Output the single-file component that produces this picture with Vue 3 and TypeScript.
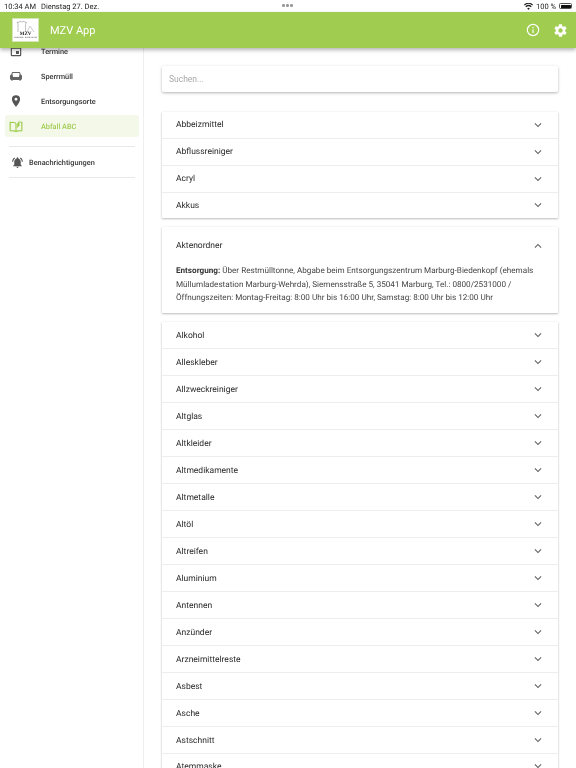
<script setup lang="ts">
const before: string[] = ['Abbeizmittel', 'Abflussreiniger', 'Acryl', 'Akkus']
const after: string[] = ['Alkohol', 'Alleskleber', 'Allzweckreiniger', 'Altglas', 'Altkleider', 'Altmedikamente', 'Altmetalle', 'Altöl', 'Altreifen', 'Aluminium', 'Antennen', 'Anzünder', 'Arzneimittelreste', 'Asbest', 'Asche', 'Astschnitt', 'Atemmaske']
</script>

<template>
  <div class="page">
    <div class="status">
      <span class="time">10:34 AM</span>
      <span class="date">Dienstag 27. Dez.</span>
      <span class="dots"><i></i><i></i><i></i></span>
      <span class="status-right">
        <svg width="9" height="7" viewBox="0 0 24 18"><path fill="#222" d="M12 18l-3.6-4.2a5.5 5.5 0 0 1 7.2 0zM5.8 10.8L3.5 8.2a13 13 0 0 1 17 0l-2.300 2.600a9.500 9.500 0 0 0-12.400 0zM1.900 6L0 3.600a18.500 18.500 0 0 1 24 0L22.100 6a15.500 15.500 0 0 0-20.200 0z"/></svg>
        <span>100 %</span>
        <span class="battery"><b></b></span>
      </span>
    </div>
    <header class="bar">
      <div class="logo">
        <svg width="25" height="22" viewBox="0 0 25 22">
          <path d="M5 13V5l-1-2 2 .5L7 2l2 1 2-1 1 1.500 1.500-.5-1 2.500V13" fill="none" stroke="#a8a8a8" stroke-width=".7"/>
          <path d="M14 13l3-6 2 3 2 3" fill="none" stroke="#b5b5b5" stroke-width=".7"/>
        </svg>
        <span class="logo-t">MZV</span>
        <span class="logo-s">MARBURG-BIEDENKOPF</span>
      </div>
      <span class="title">MZV App</span>
      <div class="actions">
        <svg width="14" height="14" viewBox="0 0 24 24"><circle cx="12" cy="12" r="9.700" fill="none" stroke="#fff" stroke-width="2"/><path d="M11 11h2v6h-2zM11 7h2v2h-2z" fill="#fff"/></svg>
        <svg width="15" height="15" viewBox="0 0 24 24"><path fill="#fff" d="M19.400 13c.04-.33.06-.66.06-1s-.02-.67-.06-1l2.100-1.650a.5.5 0 0 0 .12-.64l-2-3.460a.5.500 0 0 0-.61-.22l-2.490 1a7.300 7.300 0 0 0-1.690-.98l-.38-2.650A.49.49 0 0 0 14 2h-4a.49.49 0 0 0-.49.420l-.38 2.650c-.61.25-1.170.59-1.690.98l-2.490-1a.5.500 0 0 0-.61.220l-2 3.460a.49.49 0 0 0 .12.640L4.570 11c-.04.33-.07.67-.07 1s.03.67.07 1l-2.110 1.650a.5.500 0 0 0-.12.640l2 3.460c.12.22.39.3.61.22l2.490-1c.52.4 1.080.73 1.690.98l.38 2.650c.03.24.24.42.49.42h4c.25 0 .46-.18.49-.42l.38-2.650c.61-.25 1.170-.59 1.690-.98l2.490 1c.23.08.49 0 .61-.22l2-3.460a.5.500 0 0 0-.12-.64zM12 15.500a3.500 3.500 0 1 1 0-7 3.500 3.500 0 0 1 0 7z"/></svg>
      </div>
    </header>
    <div class="body">
      <aside class="side">
        <nav class="nav">
          <div class="item">
            <svg viewBox="0 0 24 24"><path fill="#555" d="M17 12h-5v5h5zM19 3h-1V1h-2v2H8V1H6v2H5a2 2 0 0 0-2 2v14a2 2 0 0 0 2 2h14a2 2 0 0 0 2-2V5a2 2 0 0 0-2-2zm0 16H5V8h14z"/></svg>
            <span>Termine</span>
          </div>
          <div class="item">
            <svg class="sofa" viewBox="0 0 24 24"><path fill="#666" d="M21 9V7c0-1.650-1.350-3-3-3H6C4.350 4 3 5.350 3 7v2c-1.650 0-3 1.350-3 3v5c0 1.650 1.350 3 3 3v1a1 1 0 0 0 2 0v-1h14v1a1 1 0 0 0 2 0v-1c1.650 0 3-1.350 3-3v-5c0-1.650-1.350-3-3-3zM5 7c0-.55.45-1 1-1h12c.55 0 1 .45 1 1v2.780A3 3 0 0 0 18 12v2H6v-2a3 3 0 0 0-1-2.220z"/></svg>
            <span>Sperrmüll</span>
          </div>
          <div class="item">
            <svg viewBox="0 0 24 24"><path fill="#555" d="M12 2a7 7 0 0 0-7 7c0 5.250 7 13 7 13s7-7.750 7-13a7 7 0 0 0-7-7zm0 9.500a2.500 2.500 0 1 1 0-5 2.500 2.500 0 0 1 0 5z"/></svg>
            <span>Entsorgungsorte</span>
          </div>
          <div class="item active">
            <svg viewBox="0 0 24 24"><path fill="none" stroke="#a0cc50" stroke-width="2" d="M12 7.500C10.500 6 7 5.500 2 5.500V20c5 0 8.500.5 10 1.500 1.500-1 5-1.500 10-1.500V5.500h-3M12 7.500v14"/><path fill="#a0cc50" d="M14 16V8l4-6v9z"/></svg>
            <span>Abfall ABC</span>
          </div>
        </nav>
        <hr class="rule first" />
        <div class="notify">
          <svg width="13" height="13" viewBox="0 0 24 24"><path fill="#555" d="M7.580 4.080L6.150 2.650C3.750 4.480 2.170 7.300 2.030 10.500h2a8.450 8.450 0 0 1 3.550-6.420zM19.970 10.500h2c-.15-3.200-1.730-6.020-4.120-7.850l-1.420 1.430a8.500 8.500 0 0 1 3.540 6.420zM18 11c0-3.070-1.640-5.640-4.500-6.320V4a1.500 1.500 0 0 0-3 0v.68C7.630 5.360 6 7.920 6 11v5l-2 2v1h16v-1l-2-2zM12 22a2 2 0 0 0 2-2h-4a2 2 0 0 0 2 2z"/></svg>
          <span>Benachrichtigungen</span>
        </div>
        <hr class="rule second" />
      </aside>
      <main class="main">
        <input class="search" placeholder="Suchen..." />
        <section class="card list-a">
          <div v-for="t in before" :key="t" class="row">
            <span>{{ t }}</span>
            <svg class="chev" width="14" height="14" viewBox="0 0 24 24"><path d="M7.410 8.590L12 13.170l4.590-4.580L18 10l-6 6-6-6z" fill="#666"/></svg>
          </div>
        </section>
        <section class="card open">
          <div class="open-head">
            <span>Aktenordner</span>
            <svg class="chev" width="14" height="14" viewBox="0 0 24 24"><path d="M7.410 15.410L12 10.830l4.590 4.580L18 14l-6-6-6 6z" fill="#666"/></svg>
          </div>
          <p class="text"><b>Entsorgung:</b> Über Restmülltonne, Abgabe beim Entsorgungszentrum Marburg-Biedenkopf (ehemals Müllumladestation Marburg-Wehrda), Siemensstraße 5, 35041 Marburg, Tel.: 0800/2531000 / Öffnungszeiten: Montag-Freitag: 8:00 Uhr bis 16:00 Uhr, Samstag: 8:00 Uhr bis 12:00 Uhr</p>
        </section>
        <section class="card list-b">
          <div v-for="t in after" :key="t" class="row">
            <span>{{ t }}</span>
            <svg class="chev" width="14" height="14" viewBox="0 0 24 24"><path d="M7.410 8.590L12 13.170l4.590-4.580L18 10l-6 6-6-6z" fill="#666"/></svg>
          </div>
        </section>
      </main>
    </div>
  </div>
</template>

<style scoped>
.page {
  width: 576px;
  height: 768px;
  overflow: hidden;
  display: flex;
  flex-direction: column;
  background: #fff;
  font-family: Roboto, "Liberation Sans", sans-serif;
  color: rgba(0, 0, 0, 0.87);
  text-rendering: geometricPrecision;
  will-change: transform;
}
.status {
  height: 12px;
  flex: none;
  position: relative;
  display: flex;
  align-items: center;
  padding: 0 4px;
  gap: 5px;
  font-size: 7.5px;
  color: #222;
  background: #fff;
}
.dots {
  position: absolute;
  left: 282px;
  top: 4px;
  display: flex;
  gap: 1.500px;
}
.dots i {
  width: 2.500px;
  height: 2.500px;
  border-radius: 50%;
  background: #999;
}
.status-right {
  margin-left: auto;
  display: flex;
  align-items: center;
  gap: 3px;
}
.battery {
  width: 13px;
  height: 6px;
  border: 0.500px solid #555;
  border-radius: 1.500px;
  padding: 0.500px;
  box-sizing: border-box;
  display: flex;
}
.battery b {
  flex: 1;
  background: #111;
  border-radius: 0.500px;
}
.bar {
  height: 36px;
  flex: none;
  display: flex;
  align-items: center;
  padding: 0 8.500px 0 12px;
  background: #a0cc50;
  box-shadow: 0 2px 4px rgba(0, 0, 0, 0.3);
  position: relative;
  z-index: 2;
}
.logo {
  width: 27px;
  height: 24px;
  flex: none;
  background: #fff;
  border: 1px solid #d6e5b8;
  box-sizing: border-box;
  position: relative;
  color: #222;
  font-family: "Liberation Serif", serif;
  overflow: hidden;
}
.logo svg {
  position: absolute;
  left: 0;
  top: 0;
}
.logo-t {
  position: absolute;
  left: 0;
  right: 0;
  top: 12.500px;
  text-align: center;
  font-size: 5px;
  font-weight: 700;
  line-height: 5px;
}
.logo-s {
  position: absolute;
  left: 0;
  right: 0;
  top: 17.500px;
  text-align: center;
  font-size: 2px;
  line-height: 3px;
  white-space: nowrap;
}
.title {
  margin-left: 11px;
  font-size: 11px;
  color: #fff;
}
.actions {
  margin-left: auto;
  display: flex;
  align-items: center;
  gap: 12.500px;
}
.actions svg {
  display: block;
}
.body {
  flex: 1;
  display: flex;
  min-height: 0;
}
.side {
  width: 144px;
  flex: none;
  box-sizing: border-box;
  border-right: 1px solid #efefef;
  background: #fff;
  padding: 0 4px 0 5px;
}
.nav {
  margin-top: -9.500px;
}
.item {
  height: 25px;
  display: flex;
  align-items: center;
  padding-left: 4px;
  font-size: 7.350px;
  font-weight: 500;
  color: #333;
  border-radius: 3px;
  box-sizing: border-box;
}
.item svg {
  width: 14px;
  height: 14px;
  flex: none;
}
.item svg.sofa {
  width: 12px;
  height: 12px;
  margin: 0 1px;
}
.item span {
  margin-left: 18px;
}
.item.active {
  height: 22px;
  margin: 1.500px 0;
  background: #f3f8e9;
  color: #a0cc50;
}
.rule {
  border: 0;
  border-top: 1px solid #e9e9e9;
  margin: 0 4px;
}
.rule.first {
  margin-top: 9px;
}
.notify {
  height: 30px;
  display: flex;
  align-items: center;
  padding-left: 6px;
  gap: 5px;
  font-size: 7.350px;
  font-weight: 500;
  color: #333;
}
.main {
  flex: 1;
  min-width: 0;
  padding: 18px 18px 0;
  background: #fff;
}
.search {
  display: block;
  width: 100%;
  height: 26px;
  box-sizing: border-box;
  border: 0;
  outline: 0;
  padding: 0 7px;
  font: 400 8.500px Roboto, sans-serif;
  background: #fff;
  box-shadow: 0 1px 3px rgba(0, 0, 0, 0.3);
  border-radius: 2px;
}
.search::placeholder {
  color: #a8a8a8;
  opacity: 1;
}
.card {
  background: #fff;
  box-shadow: 0 1px 2px rgba(0, 0, 0, 0.25), 0 0 2px rgba(0, 0, 0, 0.06);
  margin-top: 9px;
}
.card.list-a {
  margin-top: 19.500px;
}
.row {
  height: 27px;
  box-sizing: border-box;
  border-bottom: 1px solid #ededed;
  display: flex;
  align-items: center;
  justify-content: space-between;
  padding: 0 13.500px 0 14px;
  font-size: 8.500px;
}
.row span {
  padding-top: 1px;
}
.list-b .row span {
  padding-top: 2px;
}
.row:last-child {
  height: 25.500px;
  border-bottom: 0;
}
.chev {
  display: block;
  flex: none;
}
.open-head {
  height: 37px;
  display: flex;
  align-items: center;
  justify-content: space-between;
  padding: 0 13.500px 0 14px;
  font-size: 8.500px;
}
.text {
  margin: 0;
  padding: 0 14px 8px;
  font-size: 8.150px;
  line-height: 13.500px;
  color: #444;
}
.text b {
  font-weight: 700;
  color: #333;
}
</style>
